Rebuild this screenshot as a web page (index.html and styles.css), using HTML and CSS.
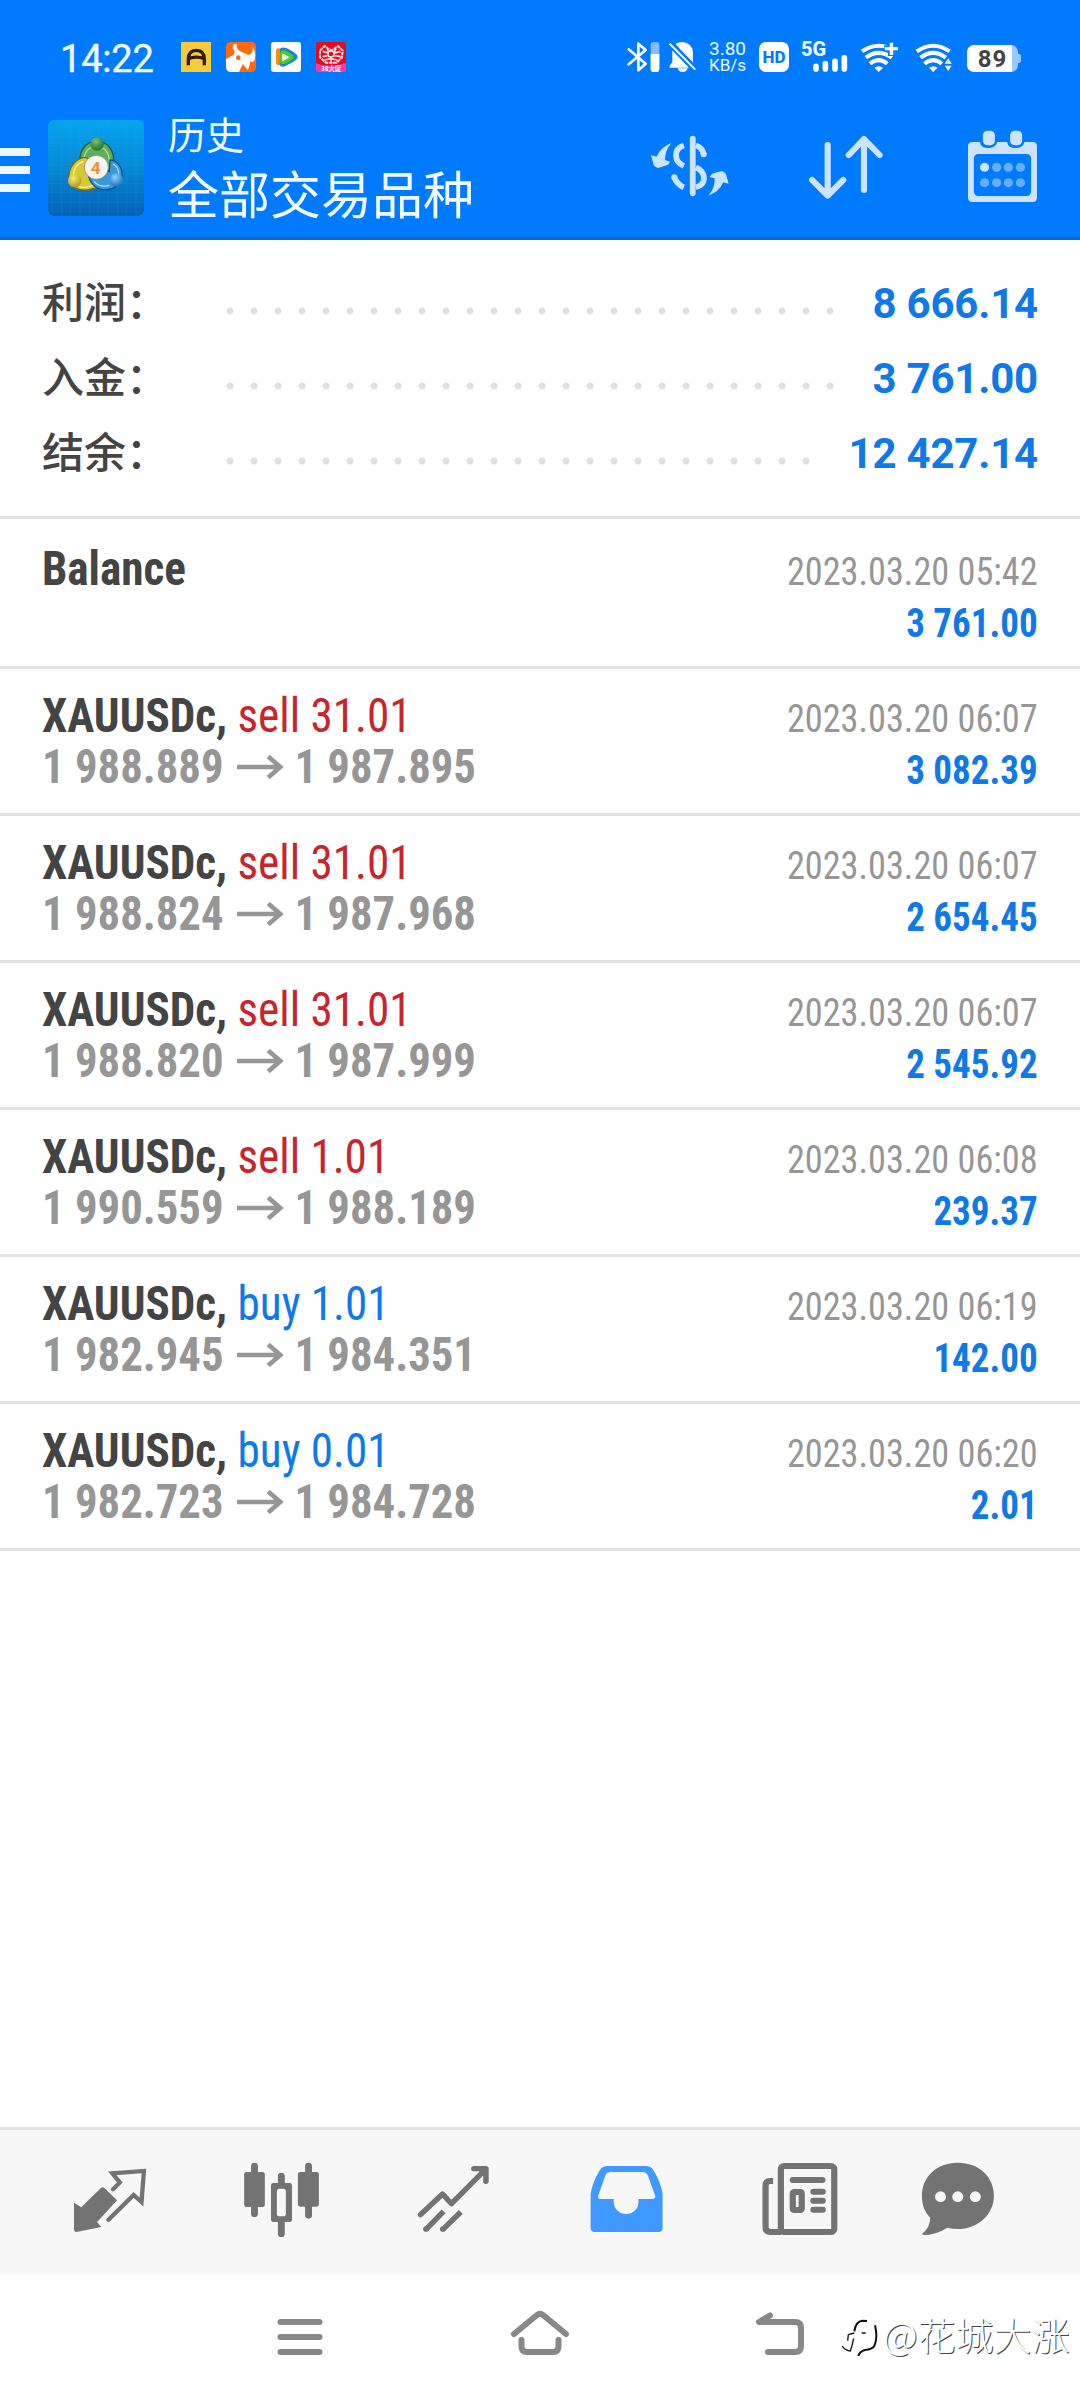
FILE: index.html
```html
<!DOCTYPE html>
<html lang="zh-CN">
<head>
<meta charset="utf-8">
<title>历史</title>
<link rel="stylesheet" href="styles.css">
</head>
<body>
<header class="header">
  <div class="status">
    <span class="clock">14:22</span>
    <div class="notices">
      <svg width="30" height="30" viewBox="0 0 90 90"><rect width="90" height="90" fill="#f7ca3a"/><path d="M22 70V52q0-27 24-27t24 27V70M22 50q24-9 48 0" fill="none" stroke="#2a1d05" stroke-width="10"/></svg>
      <svg width="30" height="30" viewBox="0 0 90 90"><rect width="90" height="90" rx="14" fill="#ff6a0c"/><path d="M22 12Q20 5 32 5Q30 24 46 29L68 39Q82 34 80 15Q91 30 86 53Q80 64 74 57L66 84L50 67L39 90H14Q0 88 0 74V52L22 38Q30 30 20 18Z" fill="#fff"/><circle cx="37" cy="47" r="7" fill="#f26a1e"/></svg>
      <svg width="30" height="30" viewBox="0 0 90 90"><rect width="90" height="90" rx="8" fill="#fff"/><path d="M15 23Q17 16 29 20V69Q17 72 15 64Z" fill="#ff8a10"/><path d="M27 20Q32 14 46 18Q80 34 80 45Q79 56 45 71Q30 78 26 69Z" fill="#1687d8"/><path d="M27 32Q30 22 44 26Q68 38 68 45Q66 54 43 65Q29 69 27 60Z" fill="#4bcc23"/><path d="M34 34L56 46L34 58Z" fill="#fff"/></svg>
      <svg width="30" height="30" viewBox="0 0 90 90"><rect width="90" height="90" rx="6" fill="#e30b20"/><path d="M0 64Q45 80 90 62V84Q90 90 84 90H6Q0 90 0 84Z" fill="#ff38a0"/><path d="M12 26L26 12L42 24L50 24L66 12L80 26L78 46L62 62H30L12 46Z" fill="none" stroke="#ffdfe0" stroke-width="6" stroke-dasharray="11 2"/><path d="M20 28L40 34M20 44L38 40M26 54L44 50L64 54M50 40L74 44M52 34L74 28M34 20L38 32M60 20L54 32M45 20V60" stroke="#ffe3e3" stroke-width="5"/><circle cx="45" cy="36" r="9" fill="#e30b20" stroke="#ffe3e3" stroke-width="4"/><text class="promo-text" x="45" y="86" text-anchor="middle">38大促</text></svg>
    </div>
    <div class="system">
      <svg class="bt" width="33" height="30" viewBox="22 36 99 90"><path d="M27 58L78 101L56 121V41L78 60L27 103" fill="none" stroke="#fff" stroke-width="8" stroke-linecap="round" stroke-linejoin="round"/><rect x="93" y="36" width="26" height="90" rx="10" fill="#80bcff"/><path d="M93 72H119V116Q119 126 109 126H103Q93 126 93 116Z" fill="#fff"/></svg>
      <svg class="bell" width="27" height="30" viewBox="147 36 81 90"><path d="M166 42Q176 36 187 36Q218 38 219 70V94Q219 99 224 104ZM157 61L207 113H149V107L157 97ZM173 115H203Q200 126 188 126Q176 126 173 115Z" fill="#fff"/><path d="M152 39L230 115" stroke="#007aff" stroke-width="10"/><path d="M149 41L226 119" stroke="#fff" stroke-width="6"/></svg>
      <div class="speed"><span>3.80</span><span>KB/s</span></div>
      <span class="hd">HD</span>
      <div class="cell"><span class="gen">5G</span><svg width="35" height="17" viewBox="0 0 105 51"><path d="M9 34V42M37 26V42M66 19V42M94 8V42" stroke="#fff" stroke-width="17" stroke-linecap="round"/></svg></div>
      <svg class="wifi1" width="38" height="30" viewBox="930 126 110 90" preserveAspectRatio="none"><path d="M936 154Q984 120 1034 154M947 173Q984 144 1022 173M959 191Q984 170 1009 191" fill="none" stroke="#fff" stroke-width="12"/><path d="M972 203Q984 194 997 203L984 216Z" fill="#fff"/><path d="M1021 122V168M1000 146H1044" stroke="#007aff" stroke-width="20"/><path d="M1021 128V165M1002 146H1040" stroke="#fff" stroke-width="10"/></svg>
      <svg class="wifi2" width="37" height="30" viewBox="1088 126 108 90" preserveAspectRatio="none"><path d="M1093 154Q1141 120 1189 154M1104 173Q1141 144 1178 173M1116 191Q1141 170 1166 191" fill="none" stroke="#fff" stroke-width="12"/><path d="M1129 203Q1141 194 1154 203L1141 216Z" fill="#fff"/><path d="M1172 178H1200V216H1172Z" fill="#007aff"/><path d="M1175 191L1185 175L1195 191ZM1175 197L1185 213L1195 197Z" fill="#fff"/></svg>
      <div class="battery"><span>89</span></div>
    </div>
  </div>
  <div class="appbar">
    <div class="burger"><i></i><i></i><i></i></div>
    <svg class="logo" width="96" height="96" viewBox="0 0 288 288">
      <defs>
        <linearGradient id="bg" x1="0" y1="0" x2="0" y2="1"><stop offset="0" stop-color="#06a4ee"/><stop offset=".5" stop-color="#0788d6"/><stop offset="1" stop-color="#0560b4"/></linearGradient>
        <radialGradient id="gr" cx=".4" cy=".3" r=".8"><stop offset="0" stop-color="#7cc070"/><stop offset="1" stop-color="#156a2c"/></radialGradient>
        <radialGradient id="ye" cx=".4" cy=".3" r=".8"><stop offset="0" stop-color="#f2ea78"/><stop offset="1" stop-color="#a8920c"/></radialGradient>
        <radialGradient id="bl" cx=".4" cy=".3" r=".8"><stop offset="0" stop-color="#8ed2fa"/><stop offset="1" stop-color="#1469b8"/></radialGradient>
      </defs>
      <rect width="288" height="288" rx="18" fill="url(#bg)"/>
      <path d="M12 0V288M40 0V288M68 0V288M96 0V288M124 0V288M152 0V288M180 0V288M208 0V288M236 0V288M264 0V288M0 22H288M0 50H288M0 78H288M0 106H288M0 134H288M0 162H288M0 190H288M0 218H288M0 246H288M0 274H288" stroke="#3fc0ff" stroke-opacity=".16" stroke-width="2"/>
      <path d="M96 134C92 92 112 64 146 64C180 64 202 94 196 134Q190 160 150 150Z" fill="#5fae58" stroke="#1c5f35" stroke-width="4"/>
      <path d="M108 124C108 96 122 80 146 80C172 80 184 100 184 126" fill="none" stroke="#b4e0a4" stroke-width="4"/>
      <path d="M112 112C78 116 60 146 63 178C68 208 104 218 146 204L128 120Z" fill="#d8c832" stroke="#7a6c10" stroke-width="4"/>
      <path d="M106 124C84 132 74 152 78 170M92 200Q112 206 134 196" fill="none" stroke="#f8f0a0" stroke-width="4"/>
      <path d="M122 170C132 204 160 216 192 206C222 194 230 160 214 136Q204 122 186 120L184 154Z" fill="#3a98dc" stroke="#0d5296" stroke-width="4"/>
      <path d="M138 184Q156 204 184 196M212 164Q214 144 196 132" fill="none" stroke="#b4e2fc" stroke-width="4"/>
      <circle cx="147" cy="72" r="20" fill="url(#gr)"/><circle cx="80" cy="182" r="20" fill="url(#ye)"/><circle cx="205" cy="179" r="20" fill="url(#bl)"/>
      <circle cx="145" cy="142" r="36" fill="#f7f3ee" stroke="#777" stroke-width="2"/>
      <text class="logo-text" x="143" y="162" text-anchor="middle">4</text>
    </svg>
    <div class="titles"><span class="t1">历史</span><span class="t2">全部交易品种</span></div>
    <div class="actions">
      <svg width="78" height="72" viewBox="322 390 228 216" preserveAspectRatio="none"><path d="M418 436Q395 444 395 466Q395 488 418 498M390 532Q398 554 418 562M453 436Q472 442 476 463M453 502Q477 512 477 536Q475 556 453 562" fill="none" stroke="#cce4ff" stroke-width="17"/><path d="M390 532h.1M476 463h.1" stroke="#cce4ff" stroke-width="18" stroke-linecap="round"/><path d="M444 416V580" stroke="#cce4ff" stroke-width="17" stroke-linecap="round"/><path d="M382 429L379 433Q363 453 363 480L378 485L372 494Q360 498 343 504Q337 504 330 496L322 465L338 470Q351 440 382 429ZM489 587L493 583Q509 563 508 535L493 531L500 522Q511 518 529 513Q535 514 541 522L549 551L533 547Q520 577 489 587Z" fill="#cce4ff"/></svg>
      <svg width="74" height="72" viewBox="782 390 214 216" preserveAspectRatio="none"><path d="M836 435V586M791 540L836 587L881 540M941 570V418M897 465L941 417L986 465" fill="none" stroke="#cce4ff" stroke-width="18" stroke-linecap="round" stroke-linejoin="round"/></svg>
      <svg width="69" height="72" viewBox="1243 390 200 216" preserveAspectRatio="none"><path fill-rule="evenodd" d="M1255 426H1431Q1443 426 1443 440V592Q1443 606 1431 606H1255Q1243 606 1243 592V440Q1243 426 1255 426ZM1274 462Q1260 462 1260 476V572Q1260 588 1274 588H1412Q1426 588 1426 572V476Q1426 462 1412 462Z" fill="#cce4ff"/><path d="M1278 424V428Q1280 444 1303 444Q1326 444 1328 424ZM1357 424V428Q1359 444 1382 444Q1405 444 1407 424Z" fill="#007aff"/><rect x="1286" y="392" width="35" height="44" rx="14" fill="#cce4ff"/><rect x="1365" y="392" width="35" height="44" rx="14" fill="#cce4ff"/><g fill="#66afff"><circle cx="1326" cy="502" r="13.500"/><circle cx="1360" cy="502" r="13.500"/><circle cx="1395" cy="502" r="13.500"/><circle cx="1291" cy="548" r="13.500"/><circle cx="1326" cy="548" r="13.500"/><circle cx="1360" cy="548" r="13.500"/><circle cx="1395" cy="548" r="13.500"/></g><circle cx="1291" cy="502" r="13.500" fill="#cce4ff"/></svg>
    </div>
  </div>
</header>
<main class="content">
  <section class="summary">
    <div class="sum"><span class="label">利润：</span><i class="dots"></i><b>8 666.14</b></div>
    <div class="sum"><span class="label">入金：</span><i class="dots"></i><b>3 761.00</b></div>
    <div class="sum"><span class="label">结余：</span><i class="dots"></i><b>12 427.14</b></div>
  </section>
  <section class="deals">
    <article class="deal first"><div class="left"><p class="name"><b>Balance</b></p></div><div class="right"><time>2023.03.20 05:42</time><b>3 761.00</b></div></article>
    <article class="deal"><div class="left"><p class="name"><b>XAUUSDc,</b> <span class="sell">sell 31.01</span></p><p class="price"><span>1 988.889</span><svg class="arrow" viewBox="0 0 46 24" preserveAspectRatio="none"><path d="M0 12H42M31 1.500L43 12L31 22.500"/></svg><span>1 987.895</span></p></div><div class="right"><time>2023.03.20 06:07</time><b>3 082.39</b></div></article>
    <article class="deal"><div class="left"><p class="name"><b>XAUUSDc,</b> <span class="sell">sell 31.01</span></p><p class="price"><span>1 988.824</span><svg class="arrow" viewBox="0 0 46 24" preserveAspectRatio="none"><path d="M0 12H42M31 1.500L43 12L31 22.500"/></svg><span>1 987.968</span></p></div><div class="right"><time>2023.03.20 06:07</time><b>2 654.45</b></div></article>
    <article class="deal"><div class="left"><p class="name"><b>XAUUSDc,</b> <span class="sell">sell 31.01</span></p><p class="price"><span>1 988.820</span><svg class="arrow" viewBox="0 0 46 24" preserveAspectRatio="none"><path d="M0 12H42M31 1.500L43 12L31 22.500"/></svg><span>1 987.999</span></p></div><div class="right"><time>2023.03.20 06:07</time><b>2 545.92</b></div></article>
    <article class="deal"><div class="left"><p class="name"><b>XAUUSDc,</b> <span class="sell">sell 1.01</span></p><p class="price"><span>1 990.559</span><svg class="arrow" viewBox="0 0 46 24" preserveAspectRatio="none"><path d="M0 12H42M31 1.500L43 12L31 22.500"/></svg><span>1 988.189</span></p></div><div class="right"><time>2023.03.20 06:08</time><b>239.37</b></div></article>
    <article class="deal"><div class="left"><p class="name"><b>XAUUSDc,</b> <span class="buy">buy 1.01</span></p><p class="price"><span>1 982.945</span><svg class="arrow" viewBox="0 0 46 24" preserveAspectRatio="none"><path d="M0 12H42M31 1.500L43 12L31 22.500"/></svg><span>1 984.351</span></p></div><div class="right"><time>2023.03.20 06:19</time><b>142.00</b></div></article>
    <article class="deal"><div class="left"><p class="name"><b>XAUUSDc,</b> <span class="buy">buy 0.01</span></p><p class="price"><span>1 982.723</span><svg class="arrow" viewBox="0 0 46 24" preserveAspectRatio="none"><path d="M0 12H42M31 1.500L43 12L31 22.500"/></svg><span>1 984.728</span></p></div><div class="right"><time>2023.03.20 06:20</time><b>2.01</b></div></article>
  </section>
</main>
<nav class="tabs">
  <svg viewBox="0 60 522.700 432" preserveAspectRatio="none"><path d="M300 231L340 271L282 336L294 351L222 366Q215 366 215 359V278L236 292L293 234Q298 229 303 234Z" fill="#737373"/><path d="M328 238L348 217L326 190L418 183L411 276L388 255L315 329" fill="none" stroke="#737373" stroke-width="12.500" stroke-linecap="round"/></svg>
  <svg viewBox="522.700 60 522.700 432" preserveAspectRatio="none"><path d="M739 168V311M817 198V220M817 334V371M896 168V316" stroke="#737373" stroke-width="20" stroke-linecap="round"/><rect x="709" y="186" width="60" height="105" rx="7" fill="#737373"/><rect x="865" y="186" width="61" height="104" rx="7" fill="#737373"/><path fill-rule="evenodd" d="M794 219H841Q848 219 848 227V328Q848 336 841 336H794Q787 336 787 328V227Q787 219 794 219ZM812 236Q804 236 804 244V311Q804 319 812 319H823Q830 319 830 311V244Q830 236 823 236Z" fill="#737373"/></svg>
  <svg viewBox="1045.300 60 522.700 432" preserveAspectRatio="none"><path d="M1221 314L1285 252L1311 281L1405 183M1376 176H1411V214" fill="none" stroke="#737373" stroke-width="16" stroke-linecap="round" stroke-linejoin="round"/><path d="M1385 178L1412 178V204Z" fill="#737373"/><path d="M1237 358L1288 304M1286 358L1338 306" stroke="#737373" stroke-width="16"/><path d="M1237 357h.1M1286 357h.1" stroke="#737373" stroke-width="17" stroke-linecap="round"/></svg>
  <svg viewBox="0 60 522.700 432" preserveAspectRatio="none"><path fill-rule="evenodd" d="M196 168H308Q322 168 329 180Q350 214 356 252V355Q356 366 344 366H159Q147 366 147 355V252Q153 214 174 180Q181 168 196 168ZM206 186Q194 186 190 196L169 257Q167 267 177 267H214V276A36 36 0 0 0 286 276V267H326Q338 266 334 256L313 196Q308 186 297 186Z" fill="#4099ff"/></svg>
  <svg viewBox="522.700 60 522.700 432" preserveAspectRatio="none"><rect x="699.500" y="168" width="155" height="198" rx="10" fill="none" stroke="#737373" stroke-width="18"/><path d="M677 213H668Q655 213 655 228V352Q655 366 670 366H700" fill="none" stroke="#737373" stroke-width="18"/><path d="M734 210H820M794 245H821M794 272H821M794 299H821" stroke="#737373" stroke-width="18" stroke-linecap="round"/><rect x="734" y="246" width="26" height="54" rx="4" fill="none" stroke="#737373" stroke-width="18"/></svg>
  <svg viewBox="1045.300 60 522.700 432" preserveAspectRatio="none"><path d="M1213 158C1275 158 1318 200 1318 257S1270 357 1213 357Q1197 357 1183 353Q1150 375 1112 375L1110 371Q1133 352 1133 323C1115 303 1109 282 1109 257C1109 200 1152 158 1213 158Z" fill="#737373"/><circle cx="1163" cy="260" r="16" fill="#f7f7f7"/><circle cx="1213" cy="260" r="16" fill="#f7f7f7"/><circle cx="1264" cy="260" r="16" fill="#f7f7f7"/></svg>
</nav>
<footer class="sysnav">
  <svg viewBox="180 2274 240 126"><path d="M280.500 2322H319.500M280.500 2337H319.500M280.500 2352H319.500"/></svg>
  <svg viewBox="420 2274 240 126"><path d="M514 2334L537 2315Q540 2312.500 543 2315L566 2334M521.500 2340V2346Q521.500 2352 527 2352H553Q558.500 2352 558.500 2346V2340"/></svg>
  <svg viewBox="660 2274 240 126"><path d="M770 2315.500L759 2322H795Q801 2322 801 2328V2346Q801 2352 795 2352H768"/></svg>
  <div class="mark">
    <svg width="42" height="44" viewBox="0 0 126 132"><g transform="translate(0,-26)" fill="none" stroke="#111"><path d="M40 84Q44 54 64 52L78 53" stroke-width="6"/><path d="M22 94L40 89M62 89H74M22 94L20 112M4 128Q10 140 28 143Q34 126 38 105" stroke-width="4"/><path d="M102 66Q111 104 100 128Q94 138 72 140Q56 144 52 158" stroke-width="6"/></g></svg>
    <span>@花城大涨</span>
  </div>
</footer>
</body>
</html>
```
FILE: styles.css
```css
* { box-sizing: border-box; margin: 0; padding: 0; }
body { width: 1080px; height: 2400px; display: flex; flex-direction: column; overflow: hidden; background: #fff; font-family: Roboto, "Noto Sans CJK SC", sans-serif; color: #444; }
svg { display: block; flex: none; }
.header { height: 240px; flex: none; background: #007aff; border-bottom: 3px solid #1068ca; color: #f0faff; }
.status { height: 99px; padding: 15px 59px 0 60px; display: flex; align-items: center; }
.clock { width: 121px; font-size: 38px; line-height: 44px; padding-top: 3px; letter-spacing: -.2px; -webkit-text-stroke: .4px #f0faff; }
.notices { display: flex; gap: 15px; }
.promo-text { font: 700 19px "Noto Sans CJK SC", sans-serif; fill: #fff; }
.system { display: flex; align-items: center; margin-left: auto; }
.bell { margin-left: 9px; }
.speed { margin-left: 12px; width: 39px; display: flex; flex-direction: column; align-items: center; font-size: 17px; line-height: 17px; }
.speed span:first-child { font-size: 19px; line-height: 16px; }
.hd { margin-left: 12px; width: 30px; height: 30px; border-radius: 7px; background: #fff; color: #007aff; font: 800 17px/31px Roboto, sans-serif; text-align: center; }
.cell { margin-left: 12px; width: 47px; height: 30px; display: flex; flex-direction: column; position: relative; }
.gen { font: 800 20px/15px Roboto, sans-serif; }
.cell svg { position: absolute; right: 0; bottom: 0; }
.wifi1 { margin-left: 12px; }
.wifi2 { margin-left: 17px; }
.battery { margin-left: 15px; width: 51px; height: 27px; margin-top: 3px; margin-right: 3px; background: linear-gradient(90deg, #fff 45px, #99caff 45px); border-radius: 7px; color: #444; font: 700 24px/28px Roboto, sans-serif; text-align: center; letter-spacing: 1px; position: relative; }
.battery::after { content: ""; position: absolute; right: -3px; top: 9px; width: 3px; height: 9px; border-radius: 0 2px 2px 0; background: #99caff; }
.appbar { height: 138px; display: flex; align-items: center; }
.burger { width: 30px; margin-top: 4px; display: flex; flex-direction: column; gap: 10px; }
.burger i { height: 8px; background: #ebf8ff; }
.logo { margin-left: 18px; }
.logo-text { font: 700 52px Roboto, sans-serif; fill: #e8913a; }
.titles { margin-left: 24px; display: flex; flex-direction: column; gap: 4px; }
.t1 { font-size: 38px; line-height: 53px; }
.t2 { font-size: 51px; line-height: 60px; }
.actions { margin-left: auto; padding: 0 43px 4px 0; display: flex; }
.actions svg + svg { margin-left: 80px; }
.actions svg:last-child { margin-left: 85px; }
.content { flex: 1; }
.summary { height: 279px; padding: 25px 42px 0; border-bottom: 3px solid #e3e3e3; }
.sum { height: 75px; display: flex; align-items: center; }
.label { width: 176px; padding-bottom: 7px; font-size: 42px; font-weight: 500; white-space: nowrap; }
.dots { flex: 1; height: 8px; margin: 17px 29px 0 0; background: radial-gradient(circle, #e1e1e1 3.2px, transparent 4px) 0 0 / 24px 8px repeat-x; }
.sum b { padding-top: 1px; font-size: 42px; letter-spacing: -.2px; color: #0f79e8; }
.deal { height: 147px; padding: 12px 42px 0; border-bottom: 3px solid #e3e3e3; display: flex; justify-content: space-between; font-stretch: 75%; }
.deal.first { height: 150px; padding-top: 15px; }
.left { font-size: 48px; }
.name, .price { line-height: 51px; white-space: nowrap; transform-origin: left; }
.name { margin-top: 9px; transform: scaleX(.941); }
.sell { color: #c6262b; }
.buy { color: #0f79e8; }
.price { display: flex; align-items: center; color: #969696; font-weight: 700; transform: scaleX(.932); }
.arrow { width: 50px; height: 24px; margin: 0 12px 0 14px; fill: none; stroke: #969696; stroke-width: 4.500; }
.right { display: flex; flex-direction: column; align-items: flex-end; font-size: 39px; line-height: 51px; padding-top: 13px; transform: scaleX(.93); transform-origin: right; }
.right time { color: #969696; }
.right b { font-size: 39.800px; color: #0f79e8; }
.tabs { height: 147px; flex: none; background: #f7f7f7; border-top: 3px solid #e3e3e3; display: flex; }
.tabs svg { width: 180px; height: 144px; }
.sysnav { height: 126px; flex: none; padding-left: 180px; display: flex; position: relative; }
.sysnav > svg { width: 240px; height: 126px; fill: none; stroke: #888; stroke-width: 6; stroke-linecap: round; stroke-linejoin: round; }
.mark { position: absolute; left: 841px; top: 38px; display: flex; color: #fff; font: 300 38px/44px "Noto Sans CJK SC", sans-serif; text-shadow: 1px 1px 0 #444; white-space: nowrap; }
```
